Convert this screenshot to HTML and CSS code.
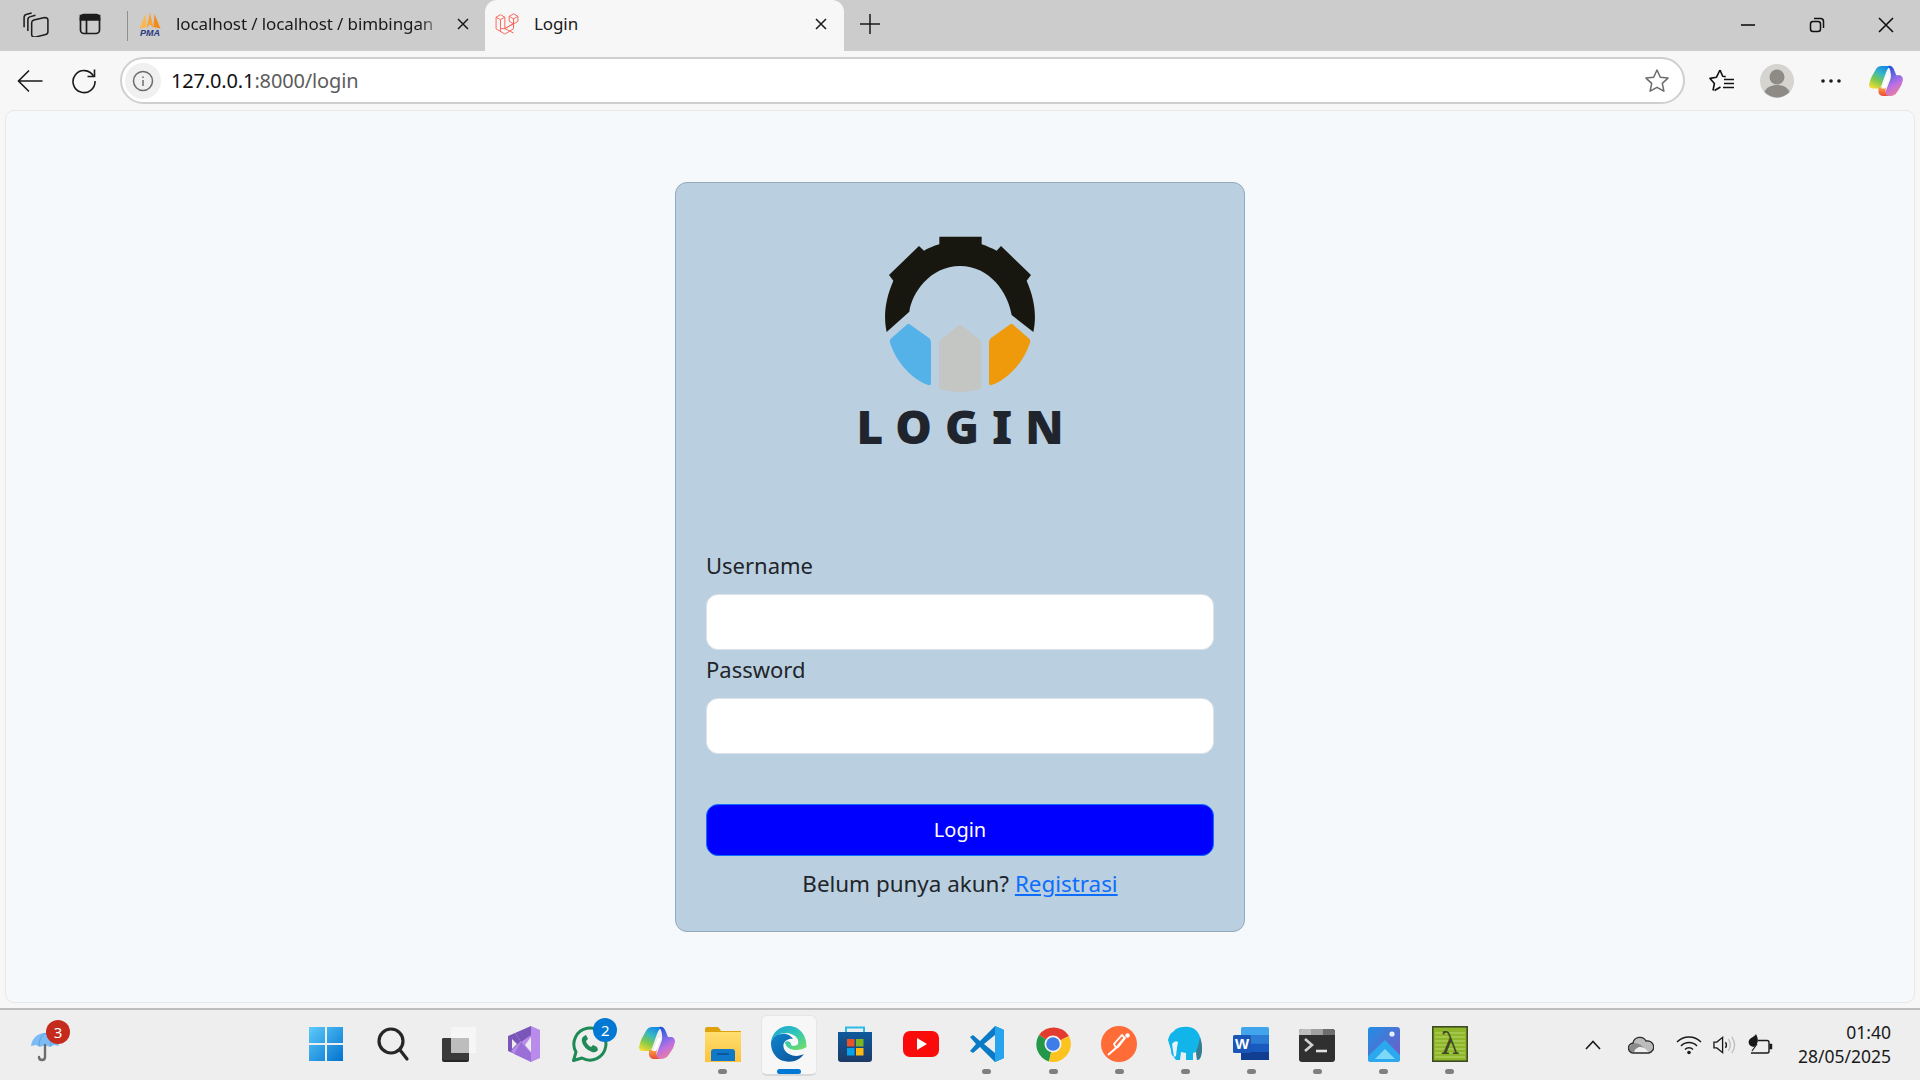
FILE: index.html
```html
<!DOCTYPE html>
<html lang="id">
<head>
<meta charset="utf-8">
<title>Login</title>
<link rel="stylesheet" href="styles.css">
</head>
<body>
<svg class="defs" width="0" height="0" aria-hidden="true">
  <defs>
    <linearGradient id="win" x1="0" y1="0" x2="1" y2="1"><stop offset="0" stop-color="#5ccbfb"/><stop offset="1" stop-color="#0272cf"/></linearGradient>
    <linearGradient id="cop" x1=".7" y1="0" x2=".2" y2="1"><stop offset="0" stop-color="#1488e8"/><stop offset=".35" stop-color="#38b8c0"/><stop offset=".65" stop-color="#7cc850"/><stop offset="1" stop-color="#f4dc30"/></linearGradient>
    <linearGradient id="cop2" x1=".3" y1="0" x2=".7" y2="1"><stop offset="0" stop-color="#1450d8"/><stop offset=".4" stop-color="#7a6ae8"/><stop offset=".65" stop-color="#c070e0"/><stop offset="1" stop-color="#f08090"/></linearGradient>
    <linearGradient id="cop3" x1="0" y1="0" x2="0" y2="1"><stop offset="0" stop-color="#f8a040"/><stop offset="1" stop-color="#ec4a38"/></linearGradient>
    <linearGradient id="edge" x1="0" y1="0" x2="1" y2="1"><stop offset="0" stop-color="#1a9ed8"/><stop offset=".5" stop-color="#2fc7b8"/><stop offset="1" stop-color="#7ae05c"/></linearGradient>
    <linearGradient id="edge2" x1="0" y1="0" x2="1" y2="1"><stop offset="0" stop-color="#0f86d0"/><stop offset="1" stop-color="#0b4f94"/></linearGradient>
    <linearGradient id="folder" x1="0" y1="0" x2="0" y2="1"><stop offset="0" stop-color="#ffdf70"/><stop offset="1" stop-color="#fcc23e"/></linearGradient>
    <linearGradient id="photos" x1="0" y1="0" x2="1" y2="1"><stop offset="0" stop-color="#1f8fe4"/><stop offset="1" stop-color="#7a58c4"/></linearGradient>
    <linearGradient id="store" x1="0" y1="0" x2="0" y2="1"><stop offset="0" stop-color="#0f5a9c"/><stop offset="1" stop-color="#1d3a66"/></linearGradient>
    <symbol id="copilot" viewBox="0 0 36 34">
      <path d="M13 1H24Q20 2 18 8L13 22Q12 25 9 25H4Q0 25 0 21 1 16 3 12L7 5Q9 1 13 1Z" fill="url(#cop)"/>
      <path d="M20 1Q25 0 27 6L29 11H33Q36 12 36 16 35 22 31 27L28 31Q25 33 22 33H14Q17 31 18 27L23 14Q24 6 20 1Z" fill="url(#cop2)"/>
      <path d="M10 24H18Q16 30 20 33H15Q11 33 10 29Z" fill="url(#cop3)"/>
      <path d="M22 12L17 25H13Q15 24 16 20L19 12Z" fill="#fff"/>
    </symbol>
  </defs>
</svg>

<header class="tabstrip">
  <div class="strip-btn">
    <svg width="26" height="26" viewBox="0 0 24 24" fill="none" stroke="#1c1c1c" stroke-width="1.400" stroke-linejoin="round"><path d="M1 15V6Q1 3.500 3.500 3L8 1.800"/><path d="M4.500 18.500V8Q4.500 5.800 7 5.200L11.500 4"/><path d="M8 11q0-2 2-2.600l9-2.200q4-.5 4 2v11q0 2-2 2.500l-9 2.200q-4 .5-4-2z"/></svg>
  </div>
  <div class="strip-btn">
    <svg width="24" height="24" viewBox="0 0 24 24" fill="none" stroke="#1c1c1c" stroke-width="1.700"><rect x="2.500" y="2.500" width="19" height="19" rx="3.500"/><path d="M2.500 3.500h19v4.500h-19z" fill="#1c1c1c"/><path d="M8.500 8v13"/></svg>
  </div>
  <div class="strip-sep"></div>
  <div class="tab">
    <svg class="tab-icon" width="24" height="24" viewBox="0 0 24 24"><path d="M12 0l3.500 16-3.500-3.500L8.500 16z" fill="#f6a535"/><path d="M7.500 2L8.500 15l-7 1.500z" fill="#fbb650"/><path d="M16.500 2L15.500 15l7 1.500z" fill="#f08c1c"/><text class="pma" x="12" y="23.500">PMA</text></svg>
    <span class="tab-title tab-fade">localhost / localhost / bimbingan</span>
    <svg class="tab-close" width="14" height="14" viewBox="0 0 14 14" stroke="#1a1a1a" stroke-width="1.500"><path d="M2 2l10 10M12 2L2 12"/></svg>
  </div>
  <div class="tab tab-active">
    <svg class="tab-icon" width="24" height="24" viewBox="0 1.500 22 20.500" fill="none" stroke="#f9665a" stroke-width=".9" stroke-linejoin="round"><path d="M1 5.500L5 3.200l4 2.300V16l8-4.600v4.700L9.600 20.700a1 1 0 0 1-1 0L1 16.200z"/><path d="M1 5.500l4 2.300 4-2.300M5 7.800v10.600M5 16l4 0M9 16l8 4"/><path d="M9 16l8-4.600V7l4-2.300"/><path d="M17 7l-4-2.300 4-2.300 4 2.300v4.600l-4 2.400-4-2.400V4.700M17 7v4.400"/></svg>
    <span class="tab-title">Login</span>
    <svg class="tab-close" width="14" height="14" viewBox="0 0 14 14" stroke="#1a1a1a" stroke-width="1.500"><path d="M2 2l10 10M12 2L2 12"/></svg>
  </div>
  <div class="strip-new">
    <svg width="22" height="22" viewBox="0 0 22 22" stroke="#1a1a1a" stroke-width="1.500"><path d="M11 1v20M1 11h20"/></svg>
  </div>
  <div class="win-controls">
    <div class="win-btn"><svg width="16" height="16" viewBox="0 0 16 16" stroke="#111" stroke-width="1.600"><path d="M1 8h14"/></svg></div>
    <div class="win-btn"><svg width="16" height="16" viewBox="0 0 16 16" fill="none" stroke="#111" stroke-width="1.500"><rect x="1.500" y="4.500" width="10" height="10" rx="2.500"/><path d="M5 1.500h6.500q3 0 3 3V11"/></svg></div>
    <div class="win-btn"><svg width="16" height="16" viewBox="0 0 16 16" stroke="#111" stroke-width="1.600"><path d="M1 1l14 14M15 1L1 15"/></svg></div>
  </div>
</header>

<nav class="toolbar">
  <div class="tool-btn">
    <svg width="26" height="26" viewBox="0 0 26 26" fill="none" stroke="#1a1a1a" stroke-width="1.600"><path d="M1.500 13h24M12 2.500L1.500 13 12 23.500"/></svg>
  </div>
  <div class="tool-btn">
    <svg width="26" height="26" viewBox="0 0 26 26" fill="none" stroke="#1a1a1a" stroke-width="1.600"><path d="M22.500 8A11 11 0 1 0 24 13"/><path d="M23.500 1.500v7h-7"/></svg>
  </div>
  <div class="addressbar">
    <div class="site-info">
      <svg width="22" height="22" viewBox="0 0 22 22" fill="none" stroke="#6b6b6b" stroke-width="1.500"><circle cx="11" cy="11" r="9.500"/><path d="M11 10v6M11 6.500v1.500"/></svg>
    </div>
    <span class="url"><span class="url-host">127.0.0.1</span>:8000/login</span>
    <svg class="star" width="26" height="26" viewBox="0 0 26 26" fill="none" stroke="#6b6b6b" stroke-width="1.500" stroke-linejoin="round"><path d="M13 2l3.300 7.200 7.700.9-5.700 5.300 1.600 7.800L13 19.300l-6.900 3.900 1.600-7.800L2 10.100l7.700-.9z"/></svg>
  </div>
  <div class="tool-right">
    <div class="tool-cell">
      <svg width="26" height="26" viewBox="0 0 26 26" fill="none" stroke="#111" stroke-width="1.600" stroke-linejoin="round"><path d="M11 2l2.700 6.300 3 .3M4 22.500l1.400-7L1 10.400l6.500-1.200L11 2M5.500 22.500l6-3.500"/><path d="M15 11.500h10M15 15.500h10M14 19.500h11"/></svg>
    </div>
    <div class="tool-cell">
      <svg width="34" height="34" viewBox="0 0 34 34"><circle cx="17" cy="17" r="17" fill="#d5d4d0"/><circle cx="17" cy="13" r="7.500" fill="#8e8b87"/><path d="M4.500 28c2-5 7-7 12.500-7s10.500 2 12.500 7a17 17 0 0 1-25 0z" fill="#8e8b87"/></svg>
    </div>
    <div class="tool-cell">
      <svg width="22" height="6" viewBox="0 0 22 6" fill="#1a1a1a"><circle cx="3" cy="3" r="1.800"/><circle cx="11" cy="3" r="1.800"/><circle cx="19" cy="3" r="1.800"/></svg>
    </div>
    <div class="tool-cell">
      <svg width="34" height="32"><use href="#copilot"/></svg>
    </div>
  </div>
</nav>

<main class="page">
  <section class="card">
    <div class="brand">
      <svg class="logo" width="280" height="190" viewBox="0 0 840 570">
        <path d="M200 366C190 320 195 270 220 212L207 195 297 108 312 122C325 115 340 108 358 103V80H485V103C500 108 515 115 530 122L543 108 633 195 620 212C645 270 650 320 640 366L575 315C565 250 510 168 420 168S275 250 268 305Z" fill="#18170f"/>
        <path d="M268 342L328 385Q333 390 333 398V518Q333 528 325 525C280 510 230 460 210 398Q207 390 214 385L262 343Q265 340 268 342Z" fill="#55b2e8"/>
        <path d="M420 343L480 390Q484 393 484 400V530Q484 538 470 541Q420 550 370 541Q357 538 357 530V400Q357 393 362 390Z" fill="#c3c6c3"/>
        <path d="M572 342L512 385Q507 390 507 398V518Q507 528 515 525C560 510 610 460 630 398Q633 390 626 385L578 343Q575 340 572 342Z" fill="#ef9a0b"/>
      </svg>
      <h1 class="brand-title">LOGIN</h1>
    </div>
    <form class="form">
      <label class="field-label" for="username">Username</label>
      <input class="field-input" id="username" type="text">
      <label class="field-label field-label-next" for="password">Password</label>
      <input class="field-input" id="password" type="password">
      <button class="submit" type="button">Login</button>
    </form>
    <p class="register">Belum punya akun? <a href="#">Registrasi</a></p>
  </section>
</main>

<footer class="taskbar">
  <div class="weather">
    <div class="weather-icon">
      <svg width="32" height="32" viewBox="0 0 32 32"><path d="M2 16C3 8 9 3 16 3s13 5 14 13l-5-1-4 2-5-2-5 2-4-2z" fill="#7cbcf5"/><path d="M16 3c-4 3-6 8-6 13M16 3c4 3 6 8 6 13" stroke="#5b9ee0" fill="none"/><path d="M16 15v12q0 3-3 3t-3-3" stroke="#6d6d6d" stroke-width="2.400" fill="none" stroke-linecap="round"/></svg>
      <span class="badge badge-red">3</span>
    </div>
  </div>
  <div class="apps">
    <div class="app">
      <svg width="36" height="36" viewBox="0 0 36 36" fill="url(#win)"><path d="M1 1h16v16H1zM19 1h16v16H19zM1 19h16v16H1zM19 19h16v16H19z"/></svg>
      <span class="dot dot-none"></span>
    </div>
    <div class="app">
      <svg width="36" height="36" viewBox="0 0 36 36" fill="none" stroke="#262626" stroke-width="3.200" stroke-linecap="round"><circle cx="17" cy="15" r="12"/><path d="M26 24l7 9"/></svg>
      <span class="dot dot-none"></span>
    </div>
    <div class="app">
      <svg width="36" height="36" viewBox="0 0 36 36"><rect x="2" y="12" width="27" height="24" rx="2" fill="#262626"/><rect x="2" y="12" width="27" height="22" rx="2" fill="#3a3a3a"/><rect x="11" y="1" width="26" height="26" rx="2" fill="#f6f6f6"/><rect x="11" y="12" width="18" height="15" fill="#bdbdbd"/></svg>
      <span class="dot dot-none"></span>
    </div>
    <div class="app">
      <svg width="36" height="36" viewBox="0 0 36 36"><path d="M2 10l7-3 6 9-6 12-7-3z" fill="#7a56b8"/><path d="M25 0l9 4v28l-9 4-10-14-6 6-4-3 9-9z" fill="#b98bea"/><path d="M25 0L9 7l6 9L25 9z" fill="#7a56b8"/><path d="M25 36L8 28l7-12 10 11z" fill="#9a70d8"/><path d="M25 11v15l-6-7z" fill="#ececec"/><path d="M6 13l5 5-5 5z" fill="#ececec"/></svg>
      <span class="dot dot-none"></span>
    </div>
    <div class="app">
      <svg width="36" height="36" viewBox="0 0 36 36" fill="none"><path d="M1.500 34.500l2.500-8.500A16 16 0 1 1 10 32z" stroke="#1f8a55" stroke-width="3" stroke-linejoin="round"/><path d="M12 10q-3 2-2 6 2 7 10 10 4 1 6-2l-1-3-4-2-2 2q-4-2-5-6l2-2-2-4z" fill="#1f8a55"/></svg>
      <span class="dot dot-none"></span>
      <span class="badge badge-blue">2</span>
    </div>
    <div class="app">
      <svg width="36" height="34"><use href="#copilot"/></svg>
      <span class="dot dot-none"></span>
    </div>
    <div class="app">
      <svg width="36" height="36" viewBox="0 0 36 36"><path d="M0 3q0-2 2-2h10q2 0 4 4h20v6H0z" fill="#dfa20c"/><rect y="6" width="36" height="30" fill="url(#folder)"/><path d="M6 35V26q0-3 3-3h18q3 0 3 3v9z" fill="#0f78c8"/><path d="M12 28h12" stroke="#07508e" stroke-width="1.500"/></svg>
      <span class="dot"></span>
    </div>
    <div class="app app-active">
      <svg width="36" height="36" viewBox="0 0 36 36"><path d="M35.500 21C36 9 28 0 18 0 8 0 1 7 0 16c3-6 9-9 15-9 7 0 14 5 12 11-1 2-7 3-7 0 0-2-3-4-6-2 0 3 3 8 11 8 4 0 8-1 10.500-3z" fill="url(#edge)"/><path d="M0 16c-.500 8 4 17 13 19 7 2 15 0 20-7-4 2-10 3-15 0-6-3-8-11-2-14 3-2 6-1 6-1-2-3-6-6-11-5-5 0-9 3-11 8z" fill="url(#edge2)"/></svg>
      <span class="dot dot-active"></span>
    </div>
    <div class="app">
      <svg width="36" height="36" viewBox="0 0 36 36"><path d="M9 8V1.500h18V8" fill="none" stroke="#2dbbe8" stroke-width="2"/><path d="M1 6h34v27q0 3-3 3H4q-3 0-3-3z" fill="url(#store)"/><rect x="10" y="13" width="7.500" height="7.500" fill="#e8532a"/><rect x="19" y="13" width="7.500" height="7.500" fill="#7fb523"/><rect x="10" y="22" width="7.500" height="7.500" fill="#08a2e6"/><rect x="19" y="22" width="7.500" height="7.500" fill="#fdb813"/></svg>
      <span class="dot dot-none"></span>
    </div>
    <div class="app">
      <svg width="36" height="36" viewBox="0 0 36 36"><rect y="5" width="36" height="26" rx="7" fill="#fa0b0b"/><path d="M14 12l10 6-10 6z" fill="#fff"/></svg>
      <span class="dot dot-none"></span>
    </div>
    <div class="app">
      <svg width="36" height="36" viewBox="0 0 36 36"><path d="M26 0L11 15 4 9 1 11l6 7-6 7 3 2 7-6 15 15 9-4V4z" fill="#0a7ac6"/><path d="M26 0l9 4v28l-9 4z" fill="#26a4ee"/><path d="M26 9L15 18l11 9z" fill="#eee"/></svg>
      <span class="dot"></span>
    </div>
    <div class="app">
      <svg width="36" height="36" viewBox="0 0 36 36"><path d="M18 18L4 9A18 18 0 0 1 34 10z" fill="#e33b2e"/><path d="M18 18L4 9a18 18 0 0 0 10 26.600z" fill="#23974a"/><path d="M18 18l16-8a18 18 0 0 1-20 25.600z" fill="#fcc31e"/><circle cx="18" cy="18" r="8.500" fill="#f2f2f2"/><circle cx="18" cy="18" r="6.800" fill="#3d7de8"/></svg>
      <span class="dot"></span>
    </div>
    <div class="app">
      <svg width="36" height="36" viewBox="0 0 36 36"><circle cx="18" cy="18" r="18" fill="#ff6c37"/><path d="M7 29l8-7 9-11M15 22l-2-4 8-9 3 3-7 9z" stroke="#fff" stroke-width="1.800" fill="none"/><circle cx="26.500" cy="9.500" r="2.200" fill="#fff"/></svg>
      <span class="dot"></span>
    </div>
    <div class="app">
      <svg width="36" height="36" viewBox="0 0 36 36"><path d="M17 1c8-1 14 3 16 10 2 6 3 13 1 19-1 3-2 4-4 4l-1-8-3 1v7h-7v-7l-5-1-1 8h-4l-3-4q-2-1-2-6L1 14c1-3 2-7 5-8 3-4 7-5 11-5z" fill="#11b5ea"/><path d="M33 11c2 6 3 13 1 19-1 3-2 4-4 4l-1-8q3-7 4-15z" fill="#555" opacity=".6"/><path d="M5 18q3-4 6-2-1 5-2 14l-2 1z" fill="#e8f3f8"/></svg>
      <span class="dot"></span>
    </div>
    <div class="app">
      <svg width="36" height="36" viewBox="0 0 36 36"><rect x="8" y="1" width="28" height="33" rx="1.500" fill="#41a5ee"/><rect x="8" y="9" width="28" height="8.500" fill="#2b7cd3"/><rect x="8" y="17.500" width="28" height="8.500" fill="#185abd"/><rect x="8" y="26" width="28" height="8" fill="#103f91"/><rect y="9" width="18" height="18" rx="1.500" fill="#1a56b8"/><text class="word" x="9" y="23">W</text></svg>
      <span class="dot"></span>
    </div>
    <div class="app">
      <svg width="36" height="36" viewBox="0 0 36 36"><rect y="3" width="36" height="33" rx="3" fill="#303030"/><path d="M0 6q0-3 3-3h9v6H0z" fill="#bdbdbd"/><path d="M12 3h12v6H12z" fill="#a0a0a0"/><path d="M24 3h9q3 0 3 3v3H24z" fill="#6d6d6d"/><path d="M6 13l7 6-7 6" fill="none" stroke="#d2d2d2" stroke-width="2.600"/><path d="M17 25h11" stroke="#e2e2e2" stroke-width="2.600"/></svg>
      <span class="dot"></span>
    </div>
    <div class="app">
      <svg width="36" height="36" viewBox="0 0 36 36"><rect x="2" y="1" width="32" height="35" rx="3" fill="url(#photos)"/><circle cx="26" cy="8" r="2.600" fill="#e8f0ff"/><path d="M2 30L19 14l15 15v4q0 3-3 3H5q-3 0-3-3z" fill="#2ba8ee"/><path d="M9 33l10-10 10 10z" fill="#7ed8f8"/></svg>
      <span class="dot"></span>
    </div>
    <div class="app">
      <svg width="36" height="36" viewBox="0 0 36 36"><rect x=".800" y=".800" width="34.400" height="34.400" fill="#8db62a" stroke="#3e4a22" stroke-width="1.600"/><path d="M3 7h30M3 11h30M3 15h30M3 19h30M3 23h30M3 27h30M3 31h30" stroke="#bcd66a" stroke-width="1"/><text class="lambda" x="18" y="28">λ</text></svg>
      <span class="dot"></span>
    </div>
  </div>
  <div class="tray">
    <div class="tray-cell tray-wide">
      <svg width="16" height="10" viewBox="0 0 16 10" fill="none" stroke="#1a1a1a" stroke-width="1.600"><path d="M1 9l7-7.500L15 9"/></svg>
    </div>
    <div class="tray-cell tray-wide">
      <svg width="26" height="18" viewBox="0 0 26 18"><path d="M6 17a5 5 0 0 1-1-10 7 7 0 0 1 13-2 5 5 0 0 1 3 12z" fill="#bcbcbc"/><path d="M5 7q6 0 9 3l7 7H6q-5 0-5-5z" fill="#8a8a8a"/><path d="M6 17q0-4 5-6 6-1 10 6z" fill="#efefef"/><path d="M6 17a5 5 0 0 1-1-10 7 7 0 0 1 13-2 5 5 0 0 1 3 12z" fill="none" stroke="#2a2a2a" stroke-width="1.300"/></svg>
    </div>
    <div class="tray-cell tray-wide">
      <svg width="26" height="20" viewBox="0 0 26 20" fill="none" stroke="#1a1a1a" stroke-width="1.500"><path d="M1 7a17 17 0 0 1 24 0M5 11a11 11 0 0 1 16 0M9 14.500a5.500 5.500 0 0 1 8 0"/><circle cx="13" cy="17.500" r="1.800" fill="#1a1a1a" stroke="none"/></svg>
    </div>
    <div class="tray-cell">
      <svg width="25" height="20" viewBox="0 0 25 20" fill="none" stroke="#1a1a1a" stroke-width="1.400"><path d="M1 7v6h3l6 5V2L4 7z"/><path d="M13 7q2 3 0 6"/><path d="M16 4q4 6 0 12M19.500 1.500q6 8.500 0 17" stroke="#bdbdbd"/></svg>
    </div>
    <div class="tray-cell tray-wide">
      <svg width="25" height="22" viewBox="0 0 25 22" fill="none" stroke="#1a1a1a" stroke-width="1.400"><path d="M10 6.500h9q2 0 2 2v9q0 1.500-2 1.500H3"/><path d="M21.500 10.500h2v4h-2" fill="#1a1a1a"/><path d="M8 0c2 4 3 8 0 11-1 2-3 2-4 1.500-3-1-4-4-3-6 1-3 5-3 7-6.500z" fill="#1a1a1a" stroke="none"/><path d="M9 10l-5 7" stroke-width="1.200"/></svg>
    </div>
    <div class="clock">
      <span>01:40</span>
      <span>28/05/2025</span>
    </div>
  </div>
</footer>
</body>
</html>
```
FILE: styles.css
```css
* { box-sizing: border-box; }

html, body {
  margin: 0;
  height: 100%;
}

body {
  width: 1920px;
  height: 1080px;
  overflow: hidden;
  display: flex;
  flex-direction: column;
  background: #f7f7f7;
  font-family: "Noto Sans", "Open Sans", sans-serif;
  color: #1a1a1a;
}

.defs { position: absolute; }

/* Tab strip */
.tabstrip {
  height: 51px;
  flex: none;
  display: flex;
  align-items: stretch;
  background: #cccccc;
}

.strip-btn {
  width: 54px;
  display: flex;
  align-items: center;
  justify-content: center;
  padding-bottom: 3px;
}

.strip-btn:first-child { margin-left: 9px; }

.strip-sep {
  width: 1px;
  height: 30px;
  margin: 11px 0 0 10px;
  background: #8f8f8f;
}

.tab {
  width: 357px;
  display: flex;
  align-items: center;
  padding: 0 15px 3px 10px;
  position: relative;
  font-size: 17px;
}

.tab-active {
  width: 359px;
  background: #f7f7f7;
  border-radius: 12px 12px 0 0;
  padding: 0 16px 3px 10px;
}

.tab-icon { flex: none; }

.tab-title {
  margin-left: 14px;
  margin-bottom: 2px;
  flex: 1;
  white-space: nowrap;
  overflow: hidden;
  letter-spacing: -0.1px;
}

.tab-active .tab-title { margin-left: 15px; }

.tab-fade {
  -webkit-mask-image: linear-gradient(to right, #000 90%, transparent 100%);
  mask-image: linear-gradient(to right, #000 90%, transparent 100%);
  margin-right: 10px;
}

.tab-close { flex: none; }

.pma {
  font: italic 700 9px "Liberation Sans", sans-serif;
  fill: #2a3a80;
  text-anchor: middle;
}

.strip-new {
  width: 52px;
  display: flex;
  align-items: center;
  justify-content: center;
  padding-bottom: 3px;
}

.win-controls {
  margin-left: auto;
  display: flex;
}

.win-btn {
  width: 69px;
  display: flex;
  align-items: center;
  justify-content: center;
  padding-bottom: 1px;
}

/* Toolbar */
.toolbar {
  height: 59px;
  flex: none;
  display: flex;
  align-items: center;
  padding-left: 3px;
}

.tool-btn {
  width: 54px;
  height: 44px;
  display: flex;
  align-items: center;
  justify-content: center;
}

.tool-btn + .tool-btn { margin-right: 9px; }

.addressbar {
  width: 1565px;
  height: 47px;
  display: flex;
  align-items: center;
  background: #fff;
  border: 2px solid #cfcfcf;
  border-radius: 24px;
  padding: 0 10px 0 3px;
}

.site-info {
  width: 36px;
  height: 36px;
  border-radius: 50%;
  background: #f0f0f0;
  display: flex;
  align-items: center;
  justify-content: center;
  flex: none;
}

.url {
  margin-left: 10px;
  flex: 1;
  font-size: 20px;
  color: #5c5c5c;
  letter-spacing: -0.15px;
}

.url-host { color: #111; }

.star { flex: none; margin-right: 3px; }

.tool-right {
  display: flex;
  margin-left: 10px;
}

.tool-cell {
  width: 54.500px;
  height: 44px;
  display: flex;
  align-items: center;
  justify-content: center;
}

/* Page */
.page {
  height: 893px;
  flex: none;
  margin: 0 5px;
  padding-top: 71px;
  background: #f5f9fc;
  border: 1px solid #e8e8e8;
  border-radius: 9px;
}

.card {
  width: 570px;
  height: 750px;
  margin: 0 auto;
  padding: 27px 30px 0;
  background: #bacfe0;
  border: 1px solid #94a9bb;
  border-radius: 12px;
  color: #212529;
  font-size: 22px;
  line-height: 30px;
}

.brand {
  display: flex;
  flex-direction: column;
  align-items: center;
}

.logo { display: block; }

.brand-title {
  margin: 0;
  padding-left: 13px;
  font-family: "Noto Sans", sans-serif;
  font-size: 46px;
  font-weight: 900;
  line-height: 52px;
  letter-spacing: 13px;
  color: #20242c;
}

.form {
  display: flex;
  flex-direction: column;
  margin-top: 98px;
}

.field-label { margin-bottom: 14px; }

.field-label-next { margin-top: 4.500px; }

.field-input {
  height: 55.500px;
  border: 1px solid #dee2e6;
  border-radius: 12px;
  background: #fff;
}

.submit {
  height: 52px;
  margin-top: 50.500px;
  background: #0000ff;
  border: 1px solid #0d6efd;
  border-radius: 12px;
  color: #fff;
  font: inherit;
  font-size: 20px;
}

.register {
  margin: 13px 0 0;
  text-align: center;
  font-size: 22.400px;
}

.register a { color: #0d6efd; }

/* Taskbar */
.taskbar {
  flex: 1;
  display: flex;
  margin-top: 5px;
  background: #eeeeee;
  border-top: 2px solid #bdbdbd;
}

.weather {
  width: 293px;
  flex: none;
  padding: 20px 0 0 29px;
}

.weather-icon {
  position: relative;
  width: 32px;
  height: 32px;
}

.apps { display: flex; }

.app {
  width: 66.100px;
  position: relative;
  display: flex;
  flex-direction: column;
  align-items: center;
  padding-top: 16px;
}

.app svg { flex: none; }

.app-active::before {
  content: "";
  position: absolute;
  left: 5px;
  right: 5px;
  top: 5px;
  height: 58px;
  background: #f7f7f7;
  border: 1px solid #e6e6e6;
  border-bottom: 2px solid #d8d8d8;
  border-radius: 6px;
}

.app-active svg { position: relative; }

.dot {
  width: 9px;
  height: 5px;
  margin-top: 7px;
  border-radius: 3px;
  background: #7f7f7f;
  position: relative;
}

.dot-none { background: transparent; }

.dot-active {
  width: 24px;
  background: #0078d4;
}

.badge {
  position: absolute;
  width: 24px;
  height: 24px;
  border-radius: 50%;
  color: #fff;
  font-size: 15px;
  line-height: 24px;
  text-align: center;
}

.badge-red {
  background: #c42b1c;
  top: -10px;
  left: 17px;
}

.badge-blue {
  background: #0078d4;
  top: 8px;
  left: 36px;
}

.word {
  font: 700 15px "Liberation Sans", sans-serif;
  fill: #fff;
  text-anchor: middle;
}

.lambda {
  font: 400 30px "DejaVu Serif", serif;
  fill: #3e4a22;
  text-anchor: middle;
}

.tray {
  flex: 1;
  display: flex;
  align-items: center;
  padding-left: 86px;
  padding-right: 29px;
  padding-bottom: 1px;
}

.tray-cell {
  width: 24px;
  display: flex;
  justify-content: center;
}

.tray-wide { width: 48px; }

.clock {
  margin-left: auto;
  display: flex;
  flex-direction: column;
  align-items: flex-end;
  font-size: 17.500px;
  line-height: 24px;
  color: #1a1a1a;
  padding-bottom: 2px;
}
```
